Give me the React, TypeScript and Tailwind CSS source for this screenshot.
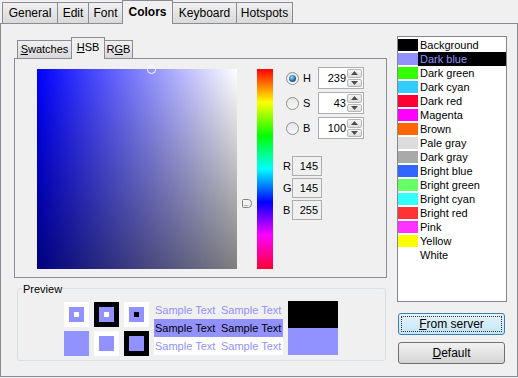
import React from 'react';

const topTabs = [
  { label: 'General', w: 'w-[56px]' },
  { label: 'Edit', w: 'w-[32px]' },
  { label: 'Font', w: 'w-[35px]' },
  { label: 'Colors', w: 'w-[51px]', active: true },
  { label: 'Keyboard', w: 'w-[65px]' },
  { label: 'Hotspots', w: 'w-[57px]' },
];

const colors = [
  { name: 'Background', c: 'bg-[#000000]' },
  { name: 'Dark blue', c: 'bg-[#9191ff]', selected: true },
  { name: 'Dark green', c: 'bg-[#33ff00]' },
  { name: 'Dark cyan', c: 'bg-[#33ccff]' },
  { name: 'Dark red', c: 'bg-[#ff0033]' },
  { name: 'Magenta', c: 'bg-[#ff00ff]' },
  { name: 'Brown', c: 'bg-[#ff6600]' },
  { name: 'Pale gray', c: 'bg-[#dcdcdc]' },
  { name: 'Dark gray', c: 'bg-[#a9a9a9]' },
  { name: 'Bright blue', c: 'bg-[#3366ff]' },
  { name: 'Bright green', c: 'bg-[#66ff66]' },
  { name: 'Bright cyan', c: 'bg-[#33ffff]' },
  { name: 'Bright red', c: 'bg-[#ff3333]' },
  { name: 'Pink', c: 'bg-[#ff33ff]' },
  { name: 'Yellow', c: 'bg-[#ffff00]' },
  { name: 'White', c: 'bg-white' },
];

const Radio = ({ checked }: { checked?: boolean }) => (
  <div className="w-[13px] h-[13px] rounded-full border border-[#8e8f8f] bg-linear-to-b from-[#e6e6e6] to-[#f8f8f8] flex items-center justify-center">
    {checked && (
      <div className="w-[7px] h-[7px] rounded-full bg-[radial-gradient(circle_at_40%_35%,#9fdcff,#1f6aa5_55%,#0b3558)]" />
    )}
  </div>
);

const Spin = ({ value }: { value: string }) => (
  <div className="w-[46px] h-[22px] border border-[#abadb3] bg-white flex items-stretch">
    <div className="flex-1 flex items-center justify-end pr-[1px] text-[11px] text-black">{value}</div>
    <div className="w-[16px] flex flex-col py-[1px] pr-[1px] gap-[1px]">
      {[0, 1].map((i) => (
        <div
          key={i}
          className="flex-1 rounded-[2px] border border-[#b5b5b5] bg-linear-to-b from-[#f6f6f6] to-[#dedede] flex items-center justify-center"
        >
          <svg width="7" height="4" viewBox="0 0 7 4">
            {i === 0 ? <path d="M0 4 L3.5 0 L7 4 Z" fill="#4d4d4d" /> : <path d="M0 0 L3.5 4 L7 0 Z" fill="#4d4d4d" />}
          </svg>
        </div>
      ))}
    </div>
  </div>
);

const ReadBox = ({ label, value }: { label: string; value: string }) => (
  <div className="flex items-center h-[20px]">
    <span className="w-[9px] text-[11px]">{label}</span>
    <div className="w-[30px] h-[20px] border border-[#adadad] flex items-center justify-end pr-[3px] text-[11px]">
      {value}
    </div>
  </div>
);

const SampleRow = ({ cls }: { cls: string }) => (
  <div className={`h-[18px] flex items-center pl-[1px] text-[11px] ${cls}`}>
    <span className="w-[66px]">Sample Text</span>
    <span>Sample Text</span>
  </div>
);

export default function App() {
  return (
    <div className="w-[518px] h-[378px] bg-[#f0f0f0] font-['Liberation_Sans',Arial,sans-serif] text-black overflow-hidden select-none">
      {/* outer tab strip */}
      <div className="h-[23px] flex items-end pl-[2px]">
        {topTabs.map((t, i) => (
          <div
            key={t.label}
            className={`${t.w} ${i > 0 ? '-ml-px' : ''} border-x border-t border-[#898c95] flex items-center justify-center text-[12px] ${
              t.active
                ? 'relative z-10 h-[24px] -mb-px bg-[#f0f0f0] font-bold pb-[1px]'
                : 'h-[21px] bg-linear-to-b from-[#f0f0f0] to-[#d9d9d9]'
            }`}
          >
            {t.label}
          </div>
        ))}
      </div>

      {/* main panel */}
      <div className="h-[354px] border border-[#898c95] flex">
        {/* left column */}
        <div className="ml-[13px] pt-[13px] flex flex-col">
          <div className="h-[21px] flex items-end pl-[3px]">
            <div className="w-[55px] h-[18px] border-x border-t border-[#898c95] bg-linear-to-b from-[#f0f0f0] to-[#d9d9d9] flex items-center justify-center text-[11px]">
              <span><span className="underline">S</span>watches</span>
            </div>
            <div className="w-[34px] h-[22px] -ml-px -mb-px relative z-10 border-x border-t border-[#898c95] bg-[#f0f0f0] flex items-center justify-center text-[11px] pb-[2px]">
              <span><span className="underline">H</span>SB</span>
            </div>
            <div className="w-[29px] h-[18px] -ml-px border-x border-t border-[#898c95] bg-linear-to-b from-[#f0f0f0] to-[#d9d9d9] flex items-center justify-center text-[11px]">
              <span>R<span className="underline">G</span>B</span>
            </div>
          </div>

          {/* HSB panel */}
          <div className="w-[373px] h-[220px] border border-[#898c95] flex pl-[22px] pt-[10px]">
            <div className="relative w-[200px] h-[200px] bg-[linear-gradient(to_right,#0000ff,#ffffff)]">
              <div className="absolute inset-0 bg-[linear-gradient(to_bottom,rgba(0,0,0,0),rgba(0,0,0,0.5))]" />
              <div className="absolute left-[110px] top-[-4px] w-[9px] h-[9px] rounded-full border border-white" />
            </div>
            <div className="relative ml-[20px] w-[16px] h-[200px] bg-[linear-gradient(to_bottom,#ff0000,#ffff00,#00ff00,#00ffff,#0000ff,#ff00ff,#ff0033)]">
              <svg className="absolute left-[-15px] top-[130px]" width="10" height="9" viewBox="0 0 10 9">
                <path d="M1.5 0.5 H6.5 Q9.5 0.5 9.5 4.5 Q9.5 8.5 6.5 8.5 H1.5 Q0.5 8.5 0.5 7.5 V1.5 Q0.5 0.5 1.5 0.5 Z" fill="#f2f2f2" stroke="#808080" />
                <path d="M1.5 6.5 H6.5" stroke="#b0b0b0" />
              </svg>
            </div>
            <div className="ml-[13px] -mt-[2px] flex flex-col">
              <div className="flex flex-col gap-[3px]">
                {[
                  ['H', '239', true],
                  ['S', '43', false],
                  ['B', '100', false],
                ].map(([l, v, c]) => (
                  <div key={l as string} className="flex items-center h-[22px]">
                    <Radio checked={c as boolean} />
                    <span className="w-[19px] pl-[4px] text-[11px]">{l as string}</span>
                    <Spin value={v as string} />
                  </div>
                ))}
              </div>
              <div className="mt-[17px] -ml-[3px] flex flex-col gap-[2px]">
                <ReadBox label="R" value="145" />
                <ReadBox label="G" value="145" />
                <ReadBox label="B" value="255" />
              </div>
            </div>
          </div>

          {/* Preview */}
          <div className="relative mt-[10px] ml-[3px] w-[369px] h-[73px] border border-[#d5dfe5] rounded-[3px] flex pl-[46px] pt-[12px]">
            <span className="absolute left-[4px] top-[-8px] bg-[#f0f0f0] px-[1px] text-[11px]">Preview</span>
            <div className="mt-[1px] grid grid-cols-3 gap-x-[5px] gap-y-[4px] h-[54px]">
              <div className="w-[25px] h-[25px] bg-white flex items-center justify-center">
                <div className="w-[15px] h-[15px] bg-[#9191ff] flex items-center justify-center">
                  <div className="w-[5px] h-[5px] bg-white" />
                </div>
              </div>
              <div className="w-[25px] h-[25px] bg-black flex items-center justify-center">
                <div className="w-[15px] h-[15px] bg-[#9191ff] flex items-center justify-center">
                  <div className="w-[5px] h-[5px] bg-white" />
                </div>
              </div>
              <div className="w-[25px] h-[25px] bg-white flex items-center justify-center">
                <div className="w-[15px] h-[15px] bg-[#9191ff] flex items-center justify-center">
                  <div className="w-[5px] h-[5px] bg-black" />
                </div>
              </div>
              <div className="w-[25px] h-[25px] bg-[#9191ff]" />
              <div className="w-[25px] h-[25px] bg-white flex items-center justify-center">
                <div className="w-[15px] h-[15px] bg-[#9191ff]" />
              </div>
              <div className="w-[25px] h-[25px] bg-black flex items-center justify-center">
                <div className="w-[15px] h-[15px] bg-[#9191ff]" />
              </div>
            </div>
            <div className="ml-[5px] w-[129px] flex flex-col">
              <SampleRow cls="text-[#9191ff]" />
              <SampleRow cls="bg-[#9191ff] text-black" />
              <SampleRow cls="bg-white text-[#9191ff]" />
            </div>
            <div className="ml-[5px] w-[50px] flex flex-col">
              <div className="h-[27px] bg-black" />
              <div className="h-[27px] bg-[#9191ff]" />
            </div>
          </div>
        </div>

        {/* right column */}
        <div className="ml-[10px] pt-[12px] flex flex-col">
          <div className="w-[110px] h-[266px] border border-[#828790] bg-white py-px">
            {colors.map((c) => (
              <div key={c.name} className="h-[14px] flex items-stretch text-[11px]">
                <div className={`w-[20px] my-[1px] ${c.c}`} />
                <div
                  className={`flex-1 flex items-center pl-[2px] ${
                    c.selected ? 'bg-black text-[#9191ff]' : 'text-black'
                  }`}
                >
                  {c.name}
                </div>
              </div>
            ))}
          </div>
          <div className="mt-[11px] ml-[1px] w-[107px] h-[22px] rounded-[3px] border border-[#3c7fb1] bg-linear-to-b from-[#e5f4fc] to-[#c4e5f6] p-[2px]">
            <div className="w-full h-full border border-dotted border-[#333] flex items-center justify-center text-[12px]">
              <span><span className="underline">F</span>rom server</span>
            </div>
          </div>
          <div className="mt-[7px] ml-[1px] w-[107px] h-[22px] rounded-[3px] border border-[#707070] bg-linear-to-b from-[#f2f2f2] to-[#d4d4d4] flex items-center justify-center text-[12px]">
            <span><span className="underline">D</span>efault</span>
          </div>
        </div>
      </div>
    </div>
  );
}
